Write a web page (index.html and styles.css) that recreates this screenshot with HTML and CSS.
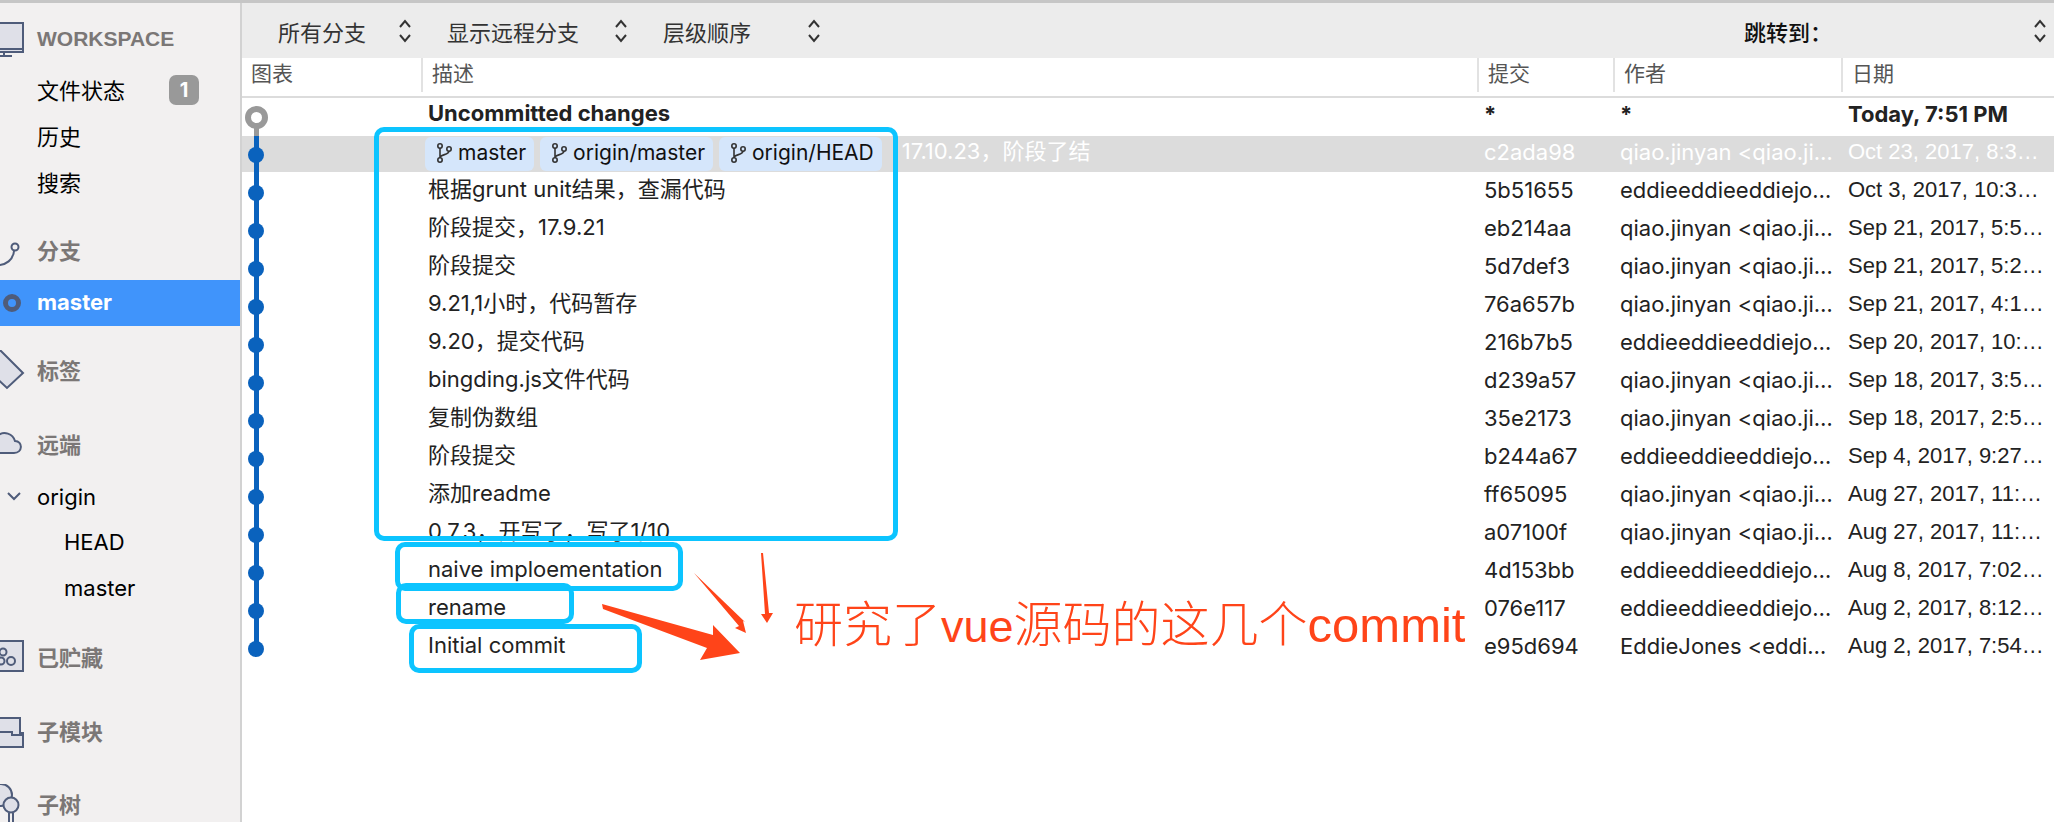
FILE: index.html
```html
<!DOCTYPE html>
<html lang="zh-CN">
<head>
    <meta charset="UTF-8">
    <meta name="viewport" content="width=device-width, initial-scale=1.0">
    <title>SourceTree</title>
    <link rel="stylesheet" href="styles.css">
</head>
<body>
    <div class="window">
        <div class="top-line"></div>
        <div class="main">
            <aside class="sidebar">
                <div class="side-row section sec-workspace">
                    <svg class="side-icon" viewBox="0 0 37 40"><path class="ico" d="M-6 3H23V32H-6Z"/><path class="ico-line" d="M-6 29H23M0 36H12M4 32V36"/></svg>
                    <span class="latin-head">WORKSPACE</span>
                </div>
                <div class="side-row item sec-first"><span class="side-gap"></span><span>文件状态</span><span class="badge">1</span></div>
                <div class="side-row item"><span class="side-gap"></span><span>历史</span></div>
                <div class="side-row item"><span class="side-gap"></span><span>搜索</span></div>
                <div class="side-row section sec-branches">
                    <svg class="side-icon" viewBox="0 0 37 40"><circle class="ico-line" cx="15" cy="17" r="3.5"/><path class="ico-line" d="M14 21C13 30 6 35-2 35"/></svg>
                    <span>分支</span>
                </div>
                <div class="side-row active">
                    <svg class="side-icon" viewBox="0 0 37 46"><circle cx="12" cy="23" r="6.5" fill="none" stroke="#4f5c7a" stroke-width="5"/></svg>
                    <span>master</span>
                </div>
                <div class="side-row section sec-tags">
                    <svg class="side-icon" viewBox="0 0 37 40"><path class="ico" d="M0 0L23 23L7 38L-12 20Z"/></svg>
                    <span>标签</span>
                </div>
                <div class="side-row section sec-remotes">
                    <svg class="side-icon" viewBox="0 0 37 40"><path class="ico" d="M-6 29H14C23 29 23 17 15 17C13 10 4 6-3 12"/></svg>
                    <span>远端</span>
                </div>
                <div class="side-row item sec-origin">
                    <svg class="side-icon" viewBox="0 0 37 46"><path class="ico-line" d="M8 19L14 25L20 19"/></svg>
                    <span>origin</span>
                </div>
                <div class="side-row item sub sec-head">HEAD</div>
                <div class="side-row item sub">master</div>
                <div class="side-row section sec-stash">
                    <svg class="side-icon" viewBox="0 0 37 40"><path class="ico" d="M-6 5H23V35H-6Z"/><circle class="ico-line" cx="3" cy="16" r="3.5"/><circle class="ico-line" cx="11" cy="25" r="4"/><circle class="ico-line" cx="1" cy="25" r="3.5"/></svg>
                    <span>已贮藏</span>
                </div>
                <div class="side-row section sec-submodules">
                    <svg class="side-icon" viewBox="0 0 37 40"><path class="ico" d="M-6 7H20V22H23V36H-6Z"/><path class="ico-line" d="M-6 21H12V24H23"/></svg>
                    <span>子模块</span>
                </div>
                <div class="side-row section sec-subtrees">
                    <svg class="side-icon" viewBox="0 0 37 40"><circle class="ico" cx="1" cy="11" r="11"/><circle class="ico" cx="11" cy="21" r="7.5"/><path class="ico-line" d="M9 29V40M13 29V40"/></svg>
                    <span>子树</span>
                </div>
            </aside>

            <section class="content">
                <div class="toolbar">
                    <div class="select select-a"><span>所有分支</span><svg class="updown" viewBox="0 0 16 30"><path d="M3 11L8 5L13 11M3 19L8 25L13 19"/></svg></div>
                    <div class="select select-b"><span>显示远程分支</span><svg class="updown" viewBox="0 0 16 30"><path d="M3 11L8 5L13 11M3 19L8 25L13 19"/></svg></div>
                    <div class="select select-c"><span>层级顺序</span><svg class="updown" viewBox="0 0 16 30"><path d="M3 11L8 5L13 11M3 19L8 25L13 19"/></svg></div>
                    <div class="select jump"><span>跳转到：</span><svg class="updown" viewBox="0 0 16 30"><path d="M3 11L8 5L13 11M3 19L8 25L13 19"/></svg></div>
                </div>

                <div class="table-head">
                    <div class="head-cell">图表</div>
                    <div class="head-cell">描述</div>
                    <div class="head-cell">提交</div>
                    <div class="head-cell">作者</div>
                    <div class="head-cell">日期</div>
                </div>

                <div class="rows">
                    <div class="row uncommitted"><div class="graph"><i class="ring"></i></div><div>Uncommitted changes</div><div>*</div><div>*</div><div class="today">Today, 7:51 PM</div></div>
                    <div class="row selected"><div class="graph"><i class="dot"></i></div>
                        <div class="tags">
                            <span class="tag"><svg class="tag-icon" viewBox="0 0 16 22"><circle cx="4" cy="4" r="2.2"/><circle cx="4" cy="18" r="2.2"/><circle cx="13" cy="7" r="2.2"/><path d="M4 6V16M13 9C13 13 6 12 4 15"/></svg>master</span>
                            <span class="tag"><svg class="tag-icon" viewBox="0 0 16 22"><circle cx="4" cy="4" r="2.2"/><circle cx="4" cy="18" r="2.2"/><circle cx="13" cy="7" r="2.2"/><path d="M4 6V16M13 9C13 13 6 12 4 15"/></svg>origin/master</span>
                            <span class="tag"><svg class="tag-icon" viewBox="0 0 16 22"><circle cx="4" cy="4" r="2.2"/><circle cx="4" cy="18" r="2.2"/><circle cx="13" cy="7" r="2.2"/><path d="M4 6V16M13 9C13 13 6 12 4 15"/></svg>origin/HEAD</span>
                            <span class="tag-msg">17.10.23，阶段了结</span>
                        </div>
                        <div>c2ada98</div><div>qiao.jinyan &lt;qiao.ji…</div><div class="date">Oct 23, 2017, 8:3…</div></div>
                    <div class="row"><div class="graph"><i class="dot"></i></div><div>根据grunt unit结果，查漏代码</div><div>5b51655</div><div>eddieeddieeddiejo…</div><div class="date">Oct 3, 2017, 10:3…</div></div>
                    <div class="row"><div class="graph"><i class="dot"></i></div><div>阶段提交，17.9.21</div><div>eb214aa</div><div>qiao.jinyan &lt;qiao.ji…</div><div class="date">Sep 21, 2017, 5:5…</div></div>
                    <div class="row"><div class="graph"><i class="dot"></i></div><div>阶段提交</div><div>5d7def3</div><div>qiao.jinyan &lt;qiao.ji…</div><div class="date">Sep 21, 2017, 5:2…</div></div>
                    <div class="row"><div class="graph"><i class="dot"></i></div><div>9.21,1小时，代码暂存</div><div>76a657b</div><div>qiao.jinyan &lt;qiao.ji…</div><div class="date">Sep 21, 2017, 4:1…</div></div>
                    <div class="row"><div class="graph"><i class="dot"></i></div><div>9.20，提交代码</div><div>216b7b5</div><div>eddieeddieeddiejo…</div><div class="date">Sep 20, 2017, 10:…</div></div>
                    <div class="row"><div class="graph"><i class="dot"></i></div><div>bingding.js文件代码</div><div>d239a57</div><div>qiao.jinyan &lt;qiao.ji…</div><div class="date">Sep 18, 2017, 3:5…</div></div>
                    <div class="row"><div class="graph"><i class="dot"></i></div><div>复制伪数组</div><div>35e2173</div><div>qiao.jinyan &lt;qiao.ji…</div><div class="date">Sep 18, 2017, 2:5…</div></div>
                    <div class="row"><div class="graph"><i class="dot"></i></div><div>阶段提交</div><div>b244a67</div><div>eddieeddieeddiejo…</div><div class="date">Sep 4, 2017, 9:27…</div></div>
                    <div class="row"><div class="graph"><i class="dot"></i></div><div>添加readme</div><div>ff65095</div><div>qiao.jinyan &lt;qiao.ji…</div><div class="date">Aug 27, 2017, 11:…</div></div>
                    <div class="row"><div class="graph"><i class="dot"></i></div><div>0.7.3，开写了，写了1/10</div><div>a07100f</div><div>qiao.jinyan &lt;qiao.ji…</div><div class="date">Aug 27, 2017, 11:…</div></div>
                    <div class="row"><div class="graph"><i class="dot"></i></div><div>naive imploementation</div><div>4d153bb</div><div>eddieeddieeddiejo…</div><div class="date">Aug 8, 2017, 7:02…</div></div>
                    <div class="row"><div class="graph"><i class="dot"></i></div><div>rename</div><div>076e117</div><div>eddieeddieeddiejo…</div><div class="date">Aug 2, 2017, 8:12…</div></div>
                    <div class="row last"><div class="graph"><i class="dot"></i></div><div>Initial commit</div><div>e95d694</div><div>EddieJones &lt;eddi…</div><div class="date">Aug 2, 2017, 7:54…</div></div>
                </div>
            </section>
        </div>

        <!-- screenshot annotations drawn on top of the app -->
        <div class="mark mark-a"></div>
        <div class="mark mark-b"></div>
        <div class="mark mark-c"></div>
        <div class="mark mark-d"></div>
        <svg class="arrows" viewBox="0 0 2054 822">
            <path d="M602 604L713 635L713 625L740 653L700 660L707 648L603 609Z"/>
            <path d="M694 573L745 622L743 621L746 633L735 628L739 626Z"/>
            <path d="M761 553L763 553L769 613L773 613L767 623L761 614L765 614Z"/>
        </svg>
        <div class="note">研究了<span class="note-latin">vue</span>源码的这几个commit</div>
    </div>
</body>
</html>
```

FILE: styles.css
```css
body {
    margin: 0;
    background: #fff;
    font-family: Inter, "Noto Sans CJK SC", sans-serif;
}
.window {
    position: relative;
    width: 2054px;
    height: 822px;
    overflow: hidden;
    display: flex;
    flex-direction: column;
}
.top-line {
    height: 3px;
    background: #c6c6c6;
    flex: none;
}
.main {
    display: flex;
    flex: 1;
    min-height: 0;
}

/* sidebar */
.sidebar {
    width: 240px;
    flex: none;
    border-right: 2px solid #d2d2d2;
    background: #f2f0f0;
    font-size: 22px;
    overflow: hidden;
}
.side-row {
    display: flex;
    align-items: center;
    height: 46px;
    position: relative;
}
.side-row > span {
    margin-bottom: 2px;
}
.side-icon {
    width: 37px;
    height: 40px;
    flex: none;
}
.side-gap {
    width: 37px;
    flex: none;
}
.section {
    color: #7b7776;
    font-weight: bold;
}
.latin-head {
    font-family: "Liberation Sans", sans-serif;
    font-size: 21px;
}
.item {
    color: #000;
}
.active {
    background: #4094fb;
    color: #fff;
    font-weight: bold;
    margin-top: 7px;
}
.active .side-icon, .sec-origin .side-icon {
    height: 46px;
}
.sub {
    padding-left: 64px;
}
.sec-workspace { margin-top: 14px; }
.sec-first { margin-top: 4px; }
.sec-branches { margin-top: 22px; }
.sec-tags { margin-top: 21px; }
.sec-remotes { margin-top: 28px; }
.sec-origin { margin-top: 7px; }
.sec-origin > span, .sec-stash > span { margin-bottom: 0; }
.sec-head { margin-top: -1px; }
.sec-stash { margin-top: 22px; }
.sec-submodules { margin-top: 29px; }
.sec-subtrees { margin-top: 27px; }
.ico {
    fill: #dfe0e8;
    stroke: #4f5c7a;
    stroke-width: 2;
}
.ico-line {
    fill: none;
    stroke: #4f5c7a;
    stroke-width: 2;
}
.badge {
    position: absolute;
    left: 169px;
    top: 8px;
    width: 30px;
    height: 30px;
    border-radius: 7px;
    background: #999;
    color: #fff;
    font-size: 20px;
    font-weight: bold;
    display: flex;
    align-items: center;
    justify-content: center;
}

/* toolbar */
.content {
    flex: 1;
    min-width: 0;
    display: flex;
    flex-direction: column;
}
.toolbar {
    height: 55px;
    flex: none;
    background: #ececec;
    display: flex;
    align-items: center;
    padding: 0 6px 0 36px;
    font-size: 22px;
    color: #333;
}
.select {
    display: flex;
    align-items: center;
    justify-content: space-between;
    margin-right: 34px;
}
.select-a { width: 135px; }
.select-b { width: 182px; }
.select-c { width: 159px; }
.jump {
    width: 304px;
    margin: 0 0 0 auto;
    color: #111;
    font-weight: 500;
}
.updown {
    width: 16px;
    height: 30px;
    flex: none;
    fill: none;
    stroke: #333;
    stroke-width: 2;
}

/* table */
.table-head {
    height: 40px;
    flex: none;
    box-sizing: border-box;
    border-bottom: 2px solid #dcdcdc;
    display: grid;
    grid-template-columns: 179px 1056px 136px 228px 1fr;
    font-size: 21px;
    color: #555;
}
.head-cell {
    height: 34px;
    padding-left: 9px;
    line-height: 32px;
    border-left: 2px solid #e2e2e2;
}
.head-cell:first-child {
    border-left: 0;
}
.rows {
    flex: 1;
}
.row {
    display: grid;
    grid-template-columns: 186px 1056px 136px 228px 1fr;
    grid-template-rows: 30px;
    align-items: center;
    height: 38px;
    box-sizing: border-box;
    padding-bottom: 8px;
    font-size: 22px;
    line-height: 30px;
    color: #222;
    white-space: nowrap;
}
.row > div:nth-child(n+3) {
    padding-top: 2px;
}
.date {
    font-family: "Liberation Sans", "Noto Sans CJK SC", sans-serif;
}
.uncommitted {
    font-weight: bold;
}
.selected {
    background: linear-gradient(#dcdcdc 36px, transparent 36px);
    color: #fff;
}
.graph {
    position: relative;
    height: 38px;
    margin-bottom: -8px;
    display: flex;
    align-items: center;
    padding-left: 6px;
}
.graph::before {
    content: "";
    position: absolute;
    left: 11.5px;
    top: 0;
    bottom: 0;
    width: 5px;
    background: #0a62bd;
}
.uncommitted .graph::before {
    top: 19px;
    background: #999;
}
.last .graph::before {
    bottom: 19px;
}
.dot {
    position: relative;
    width: 16px;
    height: 16px;
    border-radius: 50%;
    background: #0a62bd;
}
.ring {
    position: relative;
    left: -3px;
    width: 11px;
    height: 11px;
    border: 6px solid #999;
    border-radius: 50%;
    background: #fff;
}
.tags {
    display: flex;
    align-items: center;
    gap: 6px;
    margin: 1px 0 -5px -3px;
    height: 34px;
}
.tag {
    display: flex;
    align-items: center;
    gap: 6px;
    height: 34px;
    box-sizing: border-box;
    padding: 0 8px 3px 11px;
    border-radius: 6px;
    background: #d5e6fb;
    color: #111;
    font-size: 21px;
}
.tag-icon {
    width: 16px;
    height: 22px;
    fill: none;
    stroke: #333;
    stroke-width: 1.6;
}
.tag-msg {
    margin: 0 0 6px 14px;
}

/* annotations */
.mark {
    position: absolute;
    box-sizing: border-box;
    border: 5px solid #0cc4ff;
    border-radius: 10px;
}
.mark-a { left: 374px; top: 127px; width: 524px; height: 414px; }
.mark-b { left: 395px; top: 542px; width: 288px; height: 49px; }
.mark-c { left: 396px; top: 583px; width: 178px; height: 41px; }
.mark-d { left: 409px; top: 624px; width: 233px; height: 49px; }
.arrows {
    position: absolute;
    left: 0;
    top: 0;
    width: 2054px;
    height: 822px;
    fill: #ff4419;
    pointer-events: none;
}
.note {
    position: absolute;
    left: 794px;
    top: 597px;
    font-family: "Liberation Sans", "Noto Sans CJK SC", sans-serif;
    font-size: 49px;
    font-weight: 300;
    line-height: 56px;
    color: #ff4419;
    white-space: nowrap;
}
.note-latin {
    font-size: 45px;
}
```
